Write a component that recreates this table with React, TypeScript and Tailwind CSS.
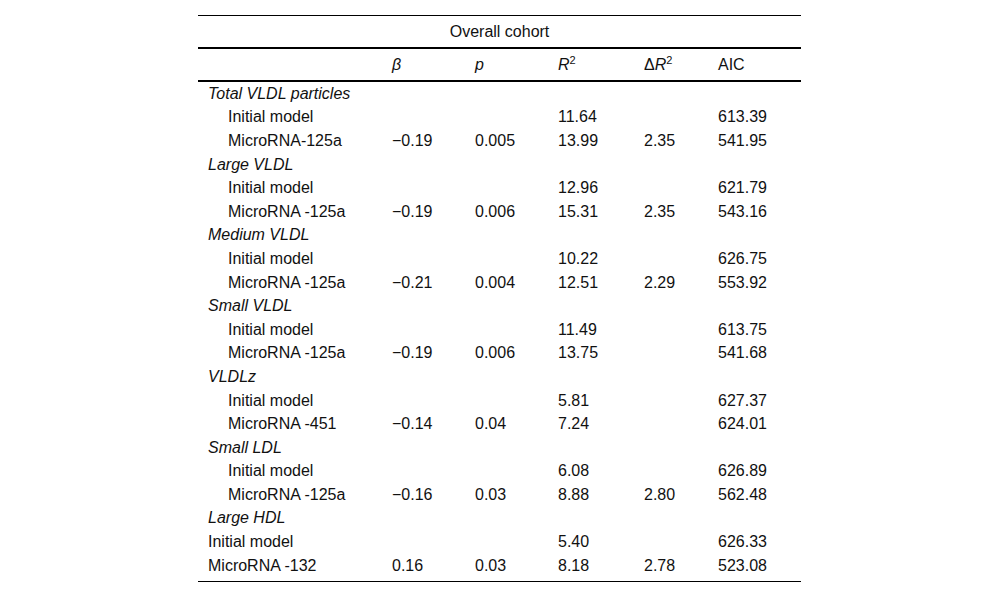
import React from "react";

const sections: { title: string; indent: boolean; rows: [string, string, string, string, string, string][] }[] = [
  { title: "Total VLDL particles", indent: true, rows: [["Initial model", "", "", "11.64", "", "613.39"], ["MicroRNA-125a", "\u22120.19", "0.005", "13.99", "2.35", "541.95"]] },
  { title: "Large VLDL", indent: true, rows: [["Initial model", "", "", "12.96", "", "621.79"], ["MicroRNA -125a", "\u22120.19", "0.006", "15.31", "2.35", "543.16"]] },
  { title: "Medium VLDL", indent: true, rows: [["Initial model", "", "", "10.22", "", "626.75"], ["MicroRNA -125a", "\u22120.21", "0.004", "12.51", "2.29", "553.92"]] },
  { title: "Small VLDL", indent: true, rows: [["Initial model", "", "", "11.49", "", "613.75"], ["MicroRNA -125a", "\u22120.19", "0.006", "13.75", "", "541.68"]] },
  { title: "VLDLz", indent: true, rows: [["Initial model", "", "", "5.81", "", "627.37"], ["MicroRNA -451", "\u22120.14", "0.04", "7.24", "", "624.01"]] },
  { title: "Small LDL", indent: true, rows: [["Initial model", "", "", "6.08", "", "626.89"], ["MicroRNA -125a", "\u22120.16", "0.03", "8.88", "2.80", "562.48"]] },
  { title: "Large HDL", indent: false, rows: [["Initial model", "", "", "5.40", "", "626.33"], ["MicroRNA -132", "0.16", "0.03", "8.18", "2.78", "523.08"]] },
];

const grid = "grid grid-cols-[184px_83px_83px_86px_74px_93px]";

export default function App() {
  return (
    <div className="w-[1000px] h-[598px] bg-white pt-[15px] text-[#111] text-[16px] leading-none" style={{ fontFamily: '"Liberation Sans", Arial, sans-serif' }}>
      <div className="w-[603px] ml-[198px] border-t border-b border-black">
        <div className="h-[33px] flex items-center justify-center border-b-2 border-black">Overall cohort</div>
        <div className={`${grid} h-[33px] items-center border-b-2 border-black`}>
          <div></div>
          <div className="pl-[10px] italic">β</div>
          <div className="pl-[10px] italic">p</div>
          <div className="pl-[10px]"><span className="italic">R</span><sup className="text-[11px] relative -top-[6px]">2</sup></div>
          <div className="pl-[10px]">Δ<span className="italic">R</span><sup className="text-[11px] relative -top-[6px]">2</sup></div>
          <div className="pl-[10px]">AIC</div>
        </div>
        <div className="pb-[4px]">
          {sections.map((s) => (
            <React.Fragment key={s.title}>
              <div className="h-[23.6px] flex items-center pl-[10px] italic">{s.title}</div>
              {s.rows.map((r, i) => (
                <div key={i} className={`${grid} h-[23.6px] items-center`}>
                  <div className={s.indent ? "pl-[30px]" : "pl-[10px]"}>{r[0]}</div>
                  <div className="pl-[10px]">{r[1]}</div>
                  <div className="pl-[10px]">{r[2]}</div>
                  <div className="pl-[10px]">{r[3]}</div>
                  <div className="pl-[10px]">{r[4]}</div>
                  <div className="pl-[10px]">{r[5]}</div>
                </div>
              ))}
            </React.Fragment>
          ))}
        </div>
      </div>
    </div>
  );
}
